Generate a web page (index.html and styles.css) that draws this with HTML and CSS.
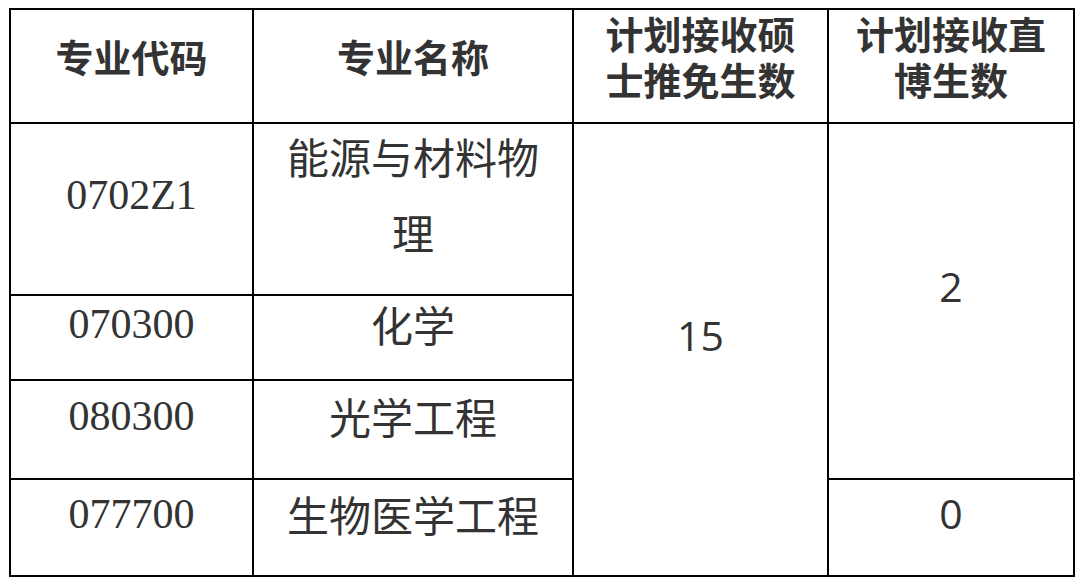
FILE: index.html
```html
<!DOCTYPE html>
<html lang="zh-CN">
<head>
<meta charset="utf-8">
<title>招生计划</title>
<link rel="stylesheet" href="styles.css">
</head>
<body>
<table class="plan">
  <colgroup>
    <col class="c1">
    <col class="c2">
    <col class="c3">
    <col class="c4">
  </colgroup>
  <thead>
    <tr class="r-head">
      <th>专业代码</th>
      <th>专业名称</th>
      <th>计划接收硕<br>士推免生数</th>
      <th>计划接收直<br>博生数</th>
    </tr>
  </thead>
  <tbody>
    <tr class="r1">
      <td class="code">0702Z1</td>
      <td class="name name2"><div class="lift">能源与材料物<br>理</div></td>
      <td class="num" rowspan="4">15</td>
      <td class="num" rowspan="3">2</td>
    </tr>
    <tr class="r2">
      <td class="code">070300</td>
      <td class="name">化学</td>
    </tr>
    <tr class="r3">
      <td class="code">080300</td>
      <td class="name">光学工程</td>
    </tr>
    <tr class="r4">
      <td class="code">077700</td>
      <td class="name">生物医学工程</td>
      <td class="num">0</td>
    </tr>
  </tbody>
</table>
</body>
</html>
```
FILE: styles.css
```css
html, body {
  margin: 0;
  padding: 0;
  background: #ffffff;
}

body {
  padding: 8px 0 0 9px;
}

.plan {
  border-collapse: separate;
  border-spacing: 0;
  table-layout: fixed;
  width: 1066px;
  border-left: 2px solid #000;
  border-top: 2px solid #000;
}

.c1 { width: 243px; }
.c2 { width: 320px; }
.c3 { width: 255px; }
.c4 { width: 246px; }

.plan th,
.plan td {
  border-right: 2px solid #000;
  border-bottom: 2px solid #000;
  padding: 0 0 28px 0;
  text-align: center;
  vertical-align: middle;
  color: #333333;
}

.plan th {
  font-family: "Noto Sans CJK SC", "Noto Sans", sans-serif;
  font-weight: 700;
  font-size: 38px;
  line-height: 46px;
  padding-bottom: 20px;
}

.r-head { height: 114px; }
.r1 { height: 172px; }
.r2 { height: 85px; }
.r3 { height: 99px; }
.r4 { height: 97px; }

.code {
  font-family: "Liberation Serif", "Times New Roman", serif;
  font-size: 42px;
  line-height: 50px;
  color: #262626;
}

.name {
  font-family: "Noto Sans CJK SC", "Noto Sans", sans-serif;
  font-weight: 400;
  font-size: 42px;
  line-height: 50px;
}

.plan .name2 {
  line-height: 76px;
  padding-bottom: 18px;
}

.lift {
  margin-top: -12px;
}

.plan .num {
  font-family: "Open Sans", "Noto Sans", sans-serif;
  font-size: 41px;
  line-height: 50px;
  padding-bottom: 30px;
}
```
